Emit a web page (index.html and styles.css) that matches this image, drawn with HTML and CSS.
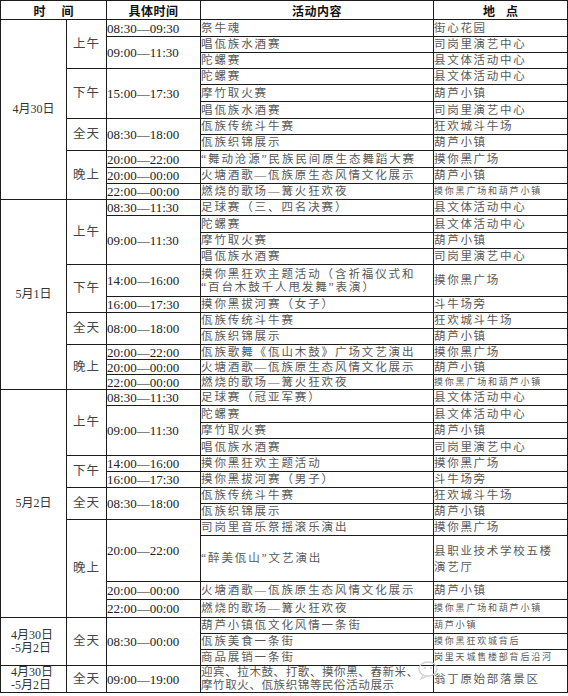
FILE: index.html
```html
<!DOCTYPE html>
<html lang="zh-CN">
<head>
<meta charset="utf-8">
<title>活动安排表</title>
<link rel="stylesheet" href="styles.css">
</head>
<body>
<div class="sheet">
<table class="schedule">
<colgroup><col class="c-date"><col class="c-period"><col class="c-time"><col class="c-act"><col class="c-place"></colgroup>
<thead>
<tr class="hd"><th colspan="2" class="th-when">时间</th><th>具体时间</th><th>活动内容</th><th class="th-place">地点</th></tr>
</thead>
<tbody>
<tr class="h17"><td rowspan="11" class="date">4月30日</td><td rowspan="3" class="period">上午</td><td class="time">08:30—09:30</td><td class="act">祭牛魂</td><td class="place">街心花园</td></tr>
<tr class="h16"><td rowspan="2" class="time">09:00—11:30</td><td class="act">唱佤族水酒赛</td><td class="place">司岗里演艺中心</td></tr>
<tr class="h16"><td class="act">陀螺赛</td><td class="place">县文体活动中心</td></tr>
<tr class="h16"><td rowspan="3" class="period">下午</td><td rowspan="3" class="time">15:00—17:30</td><td class="act">陀螺赛</td><td class="place">县文体活动中心</td></tr>
<tr class="h17"><td class="act">摩竹取火赛</td><td class="place">葫芦小镇</td></tr>
<tr class="h17"><td class="act">唱佤族水酒赛</td><td class="place">司岗里演艺中心</td></tr>
<tr class="h16"><td rowspan="2" class="period">全天</td><td rowspan="2" class="time">08:30—18:00</td><td class="act">佤族传统斗牛赛</td><td class="place">狂欢城斗牛场</td></tr>
<tr class="h16"><td class="act">佤族织锦展示</td><td class="place">葫芦小镇</td></tr>
<tr class="h17"><td rowspan="3" class="period">晚上</td><td class="time">20:00—22:00</td><td class="act">“舞动沧源”民族民间原生态舞蹈大赛</td><td class="place">摸你黑广场</td></tr>
<tr class="h16"><td class="time">20:00—00:00</td><td class="act">火塘酒歌—佤族原生态风情文化展示</td><td class="place">葫芦小镇</td></tr>
<tr class="h16"><td class="time">22:00—00:00</td><td class="act">燃烧的歌场—篝火狂欢夜</td><td class="place small">摸你黑广场和葫芦小镇</td></tr>

<tr class="h16"><td rowspan="11" class="date">5月1日</td><td rowspan="4" class="period">上午</td><td class="time">08:30—11:30</td><td class="act">足球赛（三、四名决赛）</td><td class="place">县文体活动中心</td></tr>
<tr class="h17"><td rowspan="3" class="time">09:00—11:30</td><td class="act">陀螺赛</td><td class="place">县文体活动中心</td></tr>
<tr class="h16"><td class="act">摩竹取火赛</td><td class="place">葫芦小镇</td></tr>
<tr class="h16"><td class="act">唱佤族水酒赛</td><td class="place">司岗里演艺中心</td></tr>
<tr class="h32"><td rowspan="2" class="period">下午</td><td class="time">14:00—16:00</td><td class="act">摸你黑狂欢主题活动（含祈福仪式和<br>“百台木鼓千人甩发舞”表演）</td><td class="place">摸你黑广场</td></tr>
<tr class="h16"><td class="time">16:00—17:30</td><td class="act">摸你黑拔河赛（女子）</td><td class="place">斗牛场旁</td></tr>
<tr class="h16"><td rowspan="2" class="period">全天</td><td rowspan="2" class="time">08:00—18:00</td><td class="act">佤族传统斗牛赛</td><td class="place">狂欢城斗牛场</td></tr>
<tr class="h16"><td class="act">佤族织锦展示</td><td class="place">葫芦小镇</td></tr>
<tr class="h15"><td rowspan="3" class="period">晚上</td><td class="time">20:00—22:00</td><td class="act">佤族歌舞《佤山木鼓》广场文艺演出</td><td class="place">摸你黑广场</td></tr>
<tr class="h15"><td class="time">20:00—00:00</td><td class="act">火塘酒歌—佤族原生态风情文化展示</td><td class="place">葫芦小镇</td></tr>
<tr class="h15"><td class="time">22:00—00:00</td><td class="act">燃烧的歌场—篝火狂欢夜</td><td class="place small">摸你黑广场和葫芦小镇</td></tr>

<tr class="h16"><td rowspan="12" class="date">5月2日</td><td rowspan="4" class="period">上午</td><td class="time">08:30—11:30</td><td class="act">足球赛（冠亚军赛）</td><td class="place">县文体活动中心</td></tr>
<tr class="h17"><td rowspan="3" class="time">09:00—11:30</td><td class="act">陀螺赛</td><td class="place">县文体活动中心</td></tr>
<tr class="h16"><td class="act">摩竹取火赛</td><td class="place">葫芦小镇</td></tr>
<tr class="h17"><td class="act">唱佤族水酒赛</td><td class="place">司岗里演艺中心</td></tr>
<tr class="h16"><td rowspan="2" class="period">下午</td><td class="time">14:00—16:00</td><td class="act">摸你黑狂欢主题活动</td><td class="place">摸你黑广场</td></tr>
<tr class="h16"><td class="time">16:00—17:30</td><td class="act">摸你黑拔河赛（男子）</td><td class="place">斗牛场旁</td></tr>
<tr class="h16"><td rowspan="2" class="period">全天</td><td rowspan="2" class="time">08:30—18:00</td><td class="act">佤族传统斗牛赛</td><td class="place">狂欢城斗牛场</td></tr>
<tr class="h16"><td class="act">佤族织锦展示</td><td class="place">葫芦小镇</td></tr>
<tr class="h16"><td rowspan="4" class="period">晚上</td><td rowspan="2" class="time">20:00—22:00</td><td class="act">司岗里音乐祭摇滚乐演出</td><td class="place">摸你黑广场</td></tr>
<tr class="h46"><td class="act">“醉美佤山”文艺演出</td><td class="place tall">县职业技术学校五楼<br>演艺厅</td></tr>
<tr class="h18"><td class="time">20:00—00:00</td><td class="act">火塘酒歌—佤族原生态风情文化展示</td><td class="place">葫芦小镇</td></tr>
<tr class="h18"><td class="time">22:00—00:00</td><td class="act">燃烧的歌场—篝火狂欢夜</td><td class="place small">摸你黑广场和葫芦小镇</td></tr>

<tr class="h16"><td rowspan="3" class="date two">4月30日<br>-5月2日</td><td rowspan="3" class="period">全天</td><td rowspan="3" class="time">08:30—00:00</td><td class="act">葫芦小镇佤文化风情一条街</td><td class="place small">葫芦小镇</td></tr>
<tr class="h16"><td class="act">佤族美食一条街</td><td class="place small">摸你黑狂欢城背后</td></tr>
<tr class="h16"><td class="act">商品展销一条街</td><td class="place small">岗里天城售楼部背后沿河</td></tr>
<tr class="h27"><td class="date two">4月30日<br>-5月2日</td><td class="period">全天</td><td class="time">09:00—19:00</td><td class="act tight">迎宾、拉木鼓、打歌、摸你黑、舂新米、<br>摩竹取火、佤族织锦等民俗活动展示</td><td class="place">翁丁原始部落景区</td></tr>
</tbody>
</table>
<div class="watermark" aria-hidden="true"><svg width="24" height="20" viewBox="0 0 24 20"><ellipse cx="10" cy="9" rx="9" ry="7" fill="none" stroke="#d2d2d2" stroke-width="1.4"/><path d="M5 15 L3 19 L9 16" fill="none" stroke="#d2d2d2" stroke-width="1.2"/><circle cx="7" cy="8" r="1.1" fill="#d2d2d2"/><circle cx="13" cy="8" r="1.1" fill="#d2d2d2"/></svg></div>
</div>
</body>
</html>
```

FILE: styles.css
```css
html, body {
  margin: 0;
  padding: 0;
  background: #ffffff;
}

body {
  font-family: "Liberation Serif", "Noto Sans CJK SC", serif;
  color: #333333;
}

.sheet {
  position: relative;
  width: 568px;
  height: 696px;
}

.schedule {
  border-collapse: collapse;
  table-layout: fixed;
  width: 567px;
}

.c-date { width: 66px; }
.c-period { width: 40px; }
.c-time { width: 94px; }
.c-act { width: 233px; }
.c-place { width: 134px; }

.schedule th,
.schedule td {
  border: 1px solid #1c1c1c;
  padding: 0;
  vertical-align: middle;
  line-height: 13px;
  white-space: nowrap;
  overflow: hidden;
}

.schedule th {
  height: 18px;
  font-family: "Noto Sans CJK SC", sans-serif;
  font-weight: 700;
  font-size: 12px;
  color: #111111;
  text-align: center;
  letter-spacing: 0.5px;
}

.schedule .th-when {
  letter-spacing: 16px;
  padding-left: 16px;
}

.schedule .th-place {
  letter-spacing: 11px;
  padding-left: 11px;
}

.h15 { height: 15px; }
.h16 { height: 16px; }
.h17 { height: 17px; }
.h18 { height: 18px; }
.h27 { height: 27px; }
.h32 { height: 32px; }
.h46 { height: 46px; }

.date {
  text-align: center;
  font-size: 12px;
  color: #333333;
}

.date.two {
  line-height: 13px;
  text-align: left;
  padding-left: 10px;
}

.period {
  text-align: center;
  font-size: 12.5px;
  letter-spacing: 1px;
  padding-left: 1px;
  color: #444444;
}

.time {
  font-size: 13px;
  padding-left: 7px;
  color: #222222;
}

.act {
  font-size: 11.5px;
  letter-spacing: 1.9px;
  padding-left: 8px;
  color: #585858;
}

.act.tight {
  letter-spacing: 0.6px;
}

.place {
  font-size: 11.5px;
  letter-spacing: 1.7px;
  padding-left: 6px;
  color: #585858;
}

.place.small {
  font-size: 9px;
  letter-spacing: 1.8px;
}

.place.tall {
  line-height: 16px;
}

.watermark {
  position: absolute;
  left: 418px;
  top: 660px;
  display: flex;
  align-items: center;
}
```
